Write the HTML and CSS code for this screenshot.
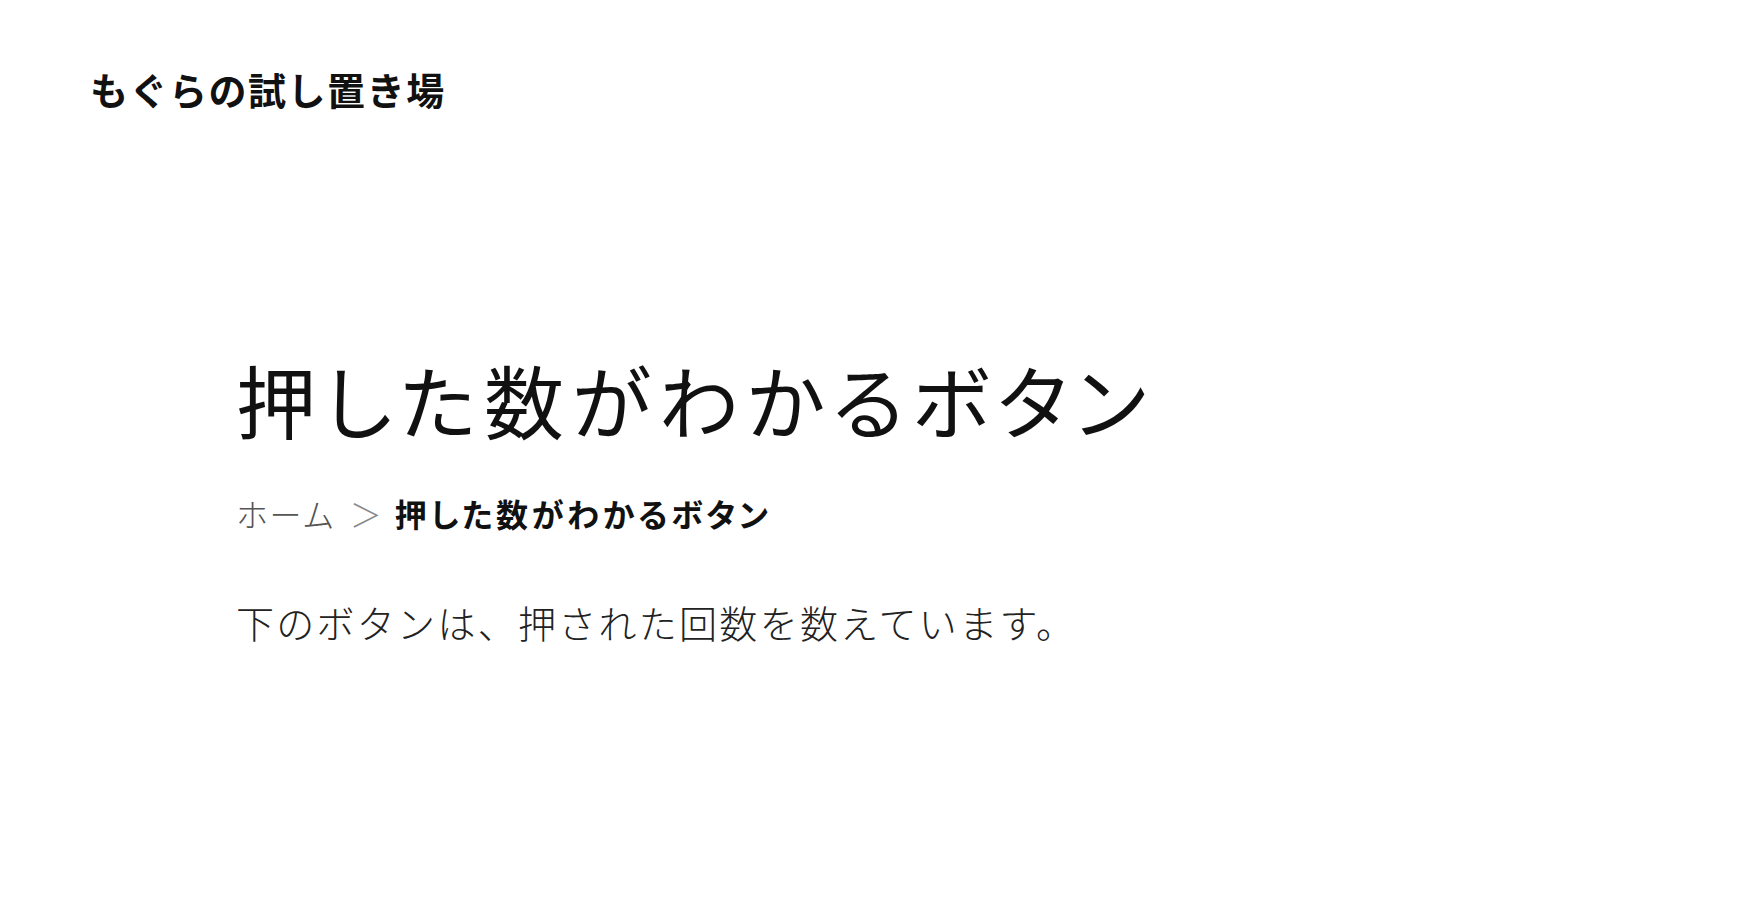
FILE: index.html
```html
<!DOCTYPE html>
<html lang="ja">
<head>
<meta charset="utf-8">
<title>押した数がわかるボタン</title>
<link rel="stylesheet" href="styles.css">
</head>
<body>
<header class="site-header">
  <div class="site-title">もぐらの試し置き場</div>
</header>
<main class="content">
  <h1 class="page-title">押した数がわかるボタン</h1>
  <nav class="breadcrumb">
    <span class="crumb-home">ホーム</span>
    <span class="crumb-sep">＞</span>
    <span class="crumb-current">押した数がわかるボタン</span>
  </nav>
  <p class="lead">下のボタンは、押された回数を数えています。</p>
</main>
</body>
</html>
```
FILE: styles.css
```css
html, body {
  margin: 0;
  padding: 0;
  background: #fff;
}
body {
  font-family: "Noto Sans CJK JP", "Noto Sans", sans-serif;
  color: #111;
}
.site-header {
  padding: 59px 0 0 90px;
}
.site-title {
  font-size: 38px;
  line-height: 60px;
  font-weight: 700;
  letter-spacing: 0.04em;
  color: #111;
}
.content {
  padding: 229px 0 0 236px;
}
.page-title {
  margin: 0;
  font-size: 80px;
  line-height: 100px;
  font-weight: 400;
  font-feature-settings: "palt";
  letter-spacing: 8px;
  color: #111;
}
.breadcrumb {
  margin-top: 40px;
  display: flex;
  align-items: center;
  gap: 14px;
  font-size: 32px;
  line-height: 50px;
}
.crumb-home {
  font-weight: 300;
  color: #555;
  letter-spacing: 0.05em;
}
.crumb-sep {
  font-weight: 300;
  color: #888;
  margin-right: -1px;
}
.crumb-current {
  font-weight: 700;
  font-feature-settings: "palt";
  letter-spacing: 3.5px;
  color: #111;
}
.lead {
  margin: 59px 0 0;
  font-size: 38px;
  line-height: 50px;
  font-weight: 300;
  letter-spacing: 0.06em;
  color: #222;
}
```
